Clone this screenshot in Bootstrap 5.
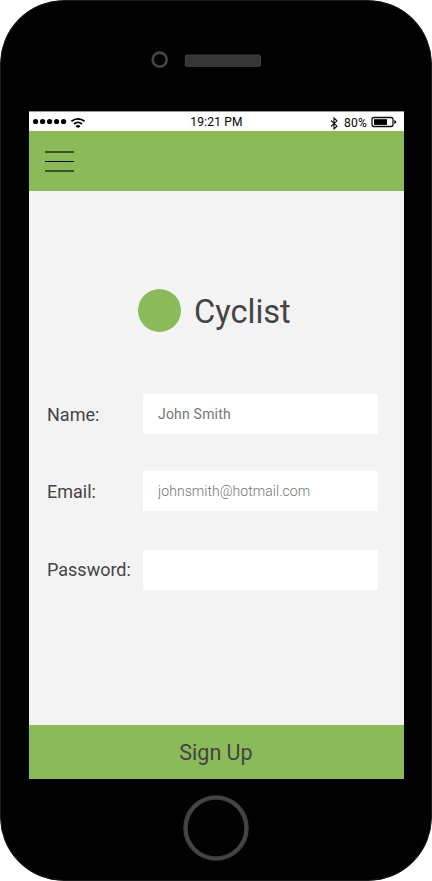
<!DOCTYPE html>
<html lang="en">
<head>
<meta charset="utf-8">
<meta name="viewport" content="width=device-width, initial-scale=1">
<title>Cyclist – Sign Up</title>
<link href="https://cdn.jsdelivr.net/npm/bootstrap@5.3.0/dist/css/bootstrap.min.css" rel="stylesheet">
<style>
body { font-family: Roboto, "Liberation Sans", sans-serif; color: #444; background: #fff; }
.phone { width: 432px; height: 881px; background: #020202; border: 1px solid #1c1c1c; border-radius: 64px; padding: 0 27px 0 28px; }
.phone-top { height: 110px; padding: 50px 0 0 122px; }
.phone-top svg { display: block; }
.screen { height: 668px; background: #f3f3f3; }
.status { height: 20px; font-size: 12px; line-height: 20px; color: #000; border-top: 1px solid #999; }
.status > * { flex: 1 1 0; }
.clock { letter-spacing: .2px; }
.battery-text { padding-top: 1px; letter-spacing: .2px; }
.topbar { height: 60px; background: #8abb58; padding: 0 0 0 16px; }
.menu-btn { line-height: 0; }
.brand { padding: 98px 0 0 109px; height: 203px; gap: 13px; }
.brand-dot { width: 43px; height: 43px; background: #8abb58; }
.brand-name { font-size: 32.6px; line-height: 43px; font-weight: 400; padding-top: 2px; }
.fields { padding: 0 26px 0 18px; }
.field-label { width: 96px; height: 40px; font-size: 18px; line-height: 40px; padding-top: 1px; }
.label-high { padding-top: 0; }
.field-box { height: 40px; padding: 0 15px; font-size: 14px; background: #fff; color: #666; }
.field-box::placeholder { color: #757575; opacity: 1; letter-spacing: .2px; }
.field-box:focus { background: #fff; box-shadow: none; }
.gap-a { margin-bottom: 37px; }
.gap-b { margin-bottom: 39px; }
.light-text::placeholder { font-weight: 300; letter-spacing: .05px; }
.signup { height: 54px; background: #8abb58; color: #444; font-size: 21.5px; line-height: 54px; }
.signup span { display: block; padding: 1px 1px 0 0; }
.home { padding: 16px 0 0 154px; line-height: 0; }
</style>
<script src="https://cdn.jsdelivr.net/npm/bootstrap@5.3.0/dist/js/bootstrap.bundle.min.js"></script>
</head>
<body>
<div class="phone overflow-hidden">
  <div class="phone-top">
    <svg width="112" height="20" viewBox="0 0 112 20">
      <circle cx="8.7" cy="8.6" r="7" fill="none" stroke="#454545" stroke-width="2.6"/>
      <rect x="34.3" y="4.1" width="75.2" height="11.2" rx="1.5" fill="#363636" stroke="#434343"/>
    </svg>
  </div>
  <div class="screen d-flex flex-column">
    <div class="status bg-white d-flex">
      <div>
        <svg class="d-block" width="60" height="19" viewBox="0 0 60 19">
          <g fill="#000"><circle cx="6.6" cy="9.5" r="2.6"/><circle cx="13.6" cy="9.5" r="2.6"/><circle cx="20.6" cy="9.5" r="2.6"/><circle cx="27.6" cy="9.5" r="2.6"/><circle cx="34.6" cy="9.5" r="2.6"/><ellipse cx="49" cy="14.3" rx="2" ry="1.4"/></g>
          <g fill="none" stroke="#000" stroke-width="1.8"><path d="M42.4 9.3Q49 4.5 55.6 9.3"/><path d="M45 11.9Q49 9 53 11.9"/></g>
        </svg>
      </div>
      <div class="clock text-center">19:21 PM</div>
      <div class="d-flex justify-content-end">
        <svg width="12" height="19" viewBox="0 0 12 19" fill="none" stroke="#111" stroke-width="1.1"><path d="M3 8.5L9 14.2L6 17V6L9 8.8L3 14.5"/></svg>
        <span class="battery-text ps-1">80%</span>
        <svg width="37" height="19" viewBox="0 0 37 19"><rect x="5" y="5.5" width="21" height="9" rx="2" fill="#fff" stroke="#111" stroke-width="1.3"/><rect x="7" y="7.2" width="13" height="5.7"/><path d="M27.3 8L29.2 9.2V10.8L27.3 12Z"/></svg>
      </div>
    </div>
    <nav class="topbar d-flex align-items-center">
      <button class="menu-btn btn p-0 border-0" type="button" aria-label="Menu">
        <svg width="29" height="22" viewBox="0 0 29 22"><path d="M0 2H29M0 21H29" stroke="#3e5428" stroke-width="1.8"/><path d="M0 11.5H29" stroke="#000"/></svg>
      </button>
    </nav>
    <main class="flex-grow-1">
      <div class="brand d-flex align-items-start">
        <div class="brand-dot rounded-circle"></div>
        <h1 class="brand-name m-0">Cyclist</h1>
      </div>
      <form class="fields">
        <div class="d-flex gap-a">
          <label class="field-label flex-shrink-0" for="name">Name:</label>
          <input class="field-box form-control border-0 rounded-0" id="name" type="text" placeholder="John Smith">
        </div>
        <div class="d-flex gap-b">
          <label class="field-label flex-shrink-0" for="email">Email:</label>
          <input class="field-box light-text form-control border-0 rounded-0" id="email" type="email" placeholder="johnsmith@hotmail.com">
        </div>
        <div class="d-flex">
          <label class="field-label label-high flex-shrink-0" for="password">Password:</label>
          <input class="field-box form-control border-0 rounded-0" id="password" type="password">
        </div>
      </form>
    </main>
    <button class="signup btn border-0 rounded-0 w-100 p-0" type="button"><span>Sign Up</span></button>
  </div>
  <div class="home">
    <svg width="66" height="66" viewBox="0 0 66 66"><circle cx="33" cy="33" r="30.5" fill="none" stroke="#3c3c3c" stroke-width="4.6"/><circle cx="33" cy="33" r="30.5" fill="none" stroke="#484848" stroke-width="2"/></svg>
  </div>
</div>
</body>
</html>
